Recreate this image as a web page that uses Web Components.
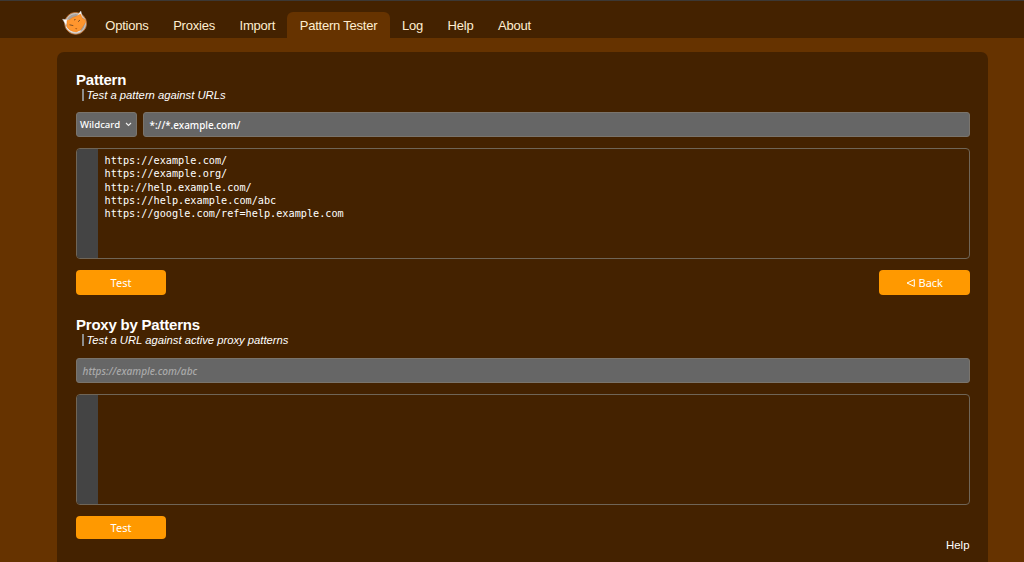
<!DOCTYPE html>
<html lang="en">
<head>
<meta charset="utf-8">
<title>Pattern Tester</title>
<style>
html,body{margin:0;height:100%;overflow:hidden;background:#663300}
body{font-family:"Liberation Sans",Arial,sans-serif;color:#fff}
</style>
</head>
<body>
<proxy-app></proxy-app>
<script>
const define = (name, html) => customElements.define(name, class extends HTMLElement {
  constructor() {
    super();
    this.attachShadow({mode: 'open'}).innerHTML = html;
  }
});

define('fox-logo', `<style>:host{display:block;width:26px;height:26px}svg{display:block}</style>
<svg width="26" height="26" viewBox="0 0 26 26">
<circle cx="13.6" cy="13.4" r="10.900" fill="#a6a29f" stroke="#c8742c" stroke-width=".9"/>
<circle cx="13.6" cy="13.4" r="9.900" fill="none" stroke="#d0c8c0" stroke-width="1"/>
<path d="M4.500 16.500c2.500 5 8 7 14 4" fill="none" stroke="#efefef" stroke-width="1.600"/>
<path d="M.6 9.300 4 15l3.500-5zM18.800 1l-4.300 6 6.200 1z" fill="#fff" stroke="#c8c8c8" stroke-width=".5"/>
<path d="M5 10.500c3-.4 4-2.600 7-3.500 2.500-.7 4-1.300 6.500-3l2 4.500c3.200 1 4 2.700 2.200 5.200l-4 6.200-4.500 2c-4 0-7.800-2.200-9.300-5.200z" fill="#ff962e" stroke="#e87818" stroke-width=".5"/>
<path d="m7.500 14.800 3.800.8M16 11.800l2-1.800M12 10l1.500-.5" fill="none" stroke="#815025" stroke-width="1"/>
<path d="m12.800 18.600 2.500-.5-.9 1.500z" fill="#a85a1c"/>
</svg>`);

define('nav-tab', `<style>
:host{display:block;box-sizing:border-box;height:26px;padding:0 12.300px;font-size:13px;letter-spacing:-.22px;line-height:27px;color:#ffeed0;border-radius:6px 6px 0 0;white-space:nowrap}
:host([active]){background:#663300}
</style><slot></slot>`);

define('nav-bar', `<style>
:host{display:flex;box-sizing:border-box;height:38px;padding-left:62px;align-items:flex-end;background:#442200;border-top:1px solid #3c3835}
fox-logo{margin:0 5px 2px 0}
</style><fox-logo></fox-logo>
<slot></slot>`);

define('section-head', `<style>
:host{display:block}
h2{margin:0;font-size:15px;letter-spacing:-.22px;line-height:19px;height:19px;font-weight:700}
p{margin:0 0 0 5.500px;height:12px;line-height:12px;border-left:2px solid #8d8d8d;padding-left:3px;font-size:11.250px;font-style:italic}
</style><h2><slot name="title"></slot></h2><p><slot></slot></p>`);

define('text-field', `<style>
:host{display:flex;align-items:center;box-sizing:border-box;height:25px;background:#666;border:1px solid #7a746c;border-radius:3px;padding:0 5.500px;font:500 9.900px "Noto Sans","Open Sans",sans-serif;color:#fff;white-space:nowrap}
:host([placeholder]){color:#aaa;font-size:10.100px;font-style:italic}
</style><slot></slot>`);

define('select-field', `<style>
:host{display:flex;align-items:center;justify-content:space-between;box-sizing:border-box;width:61px;height:25px;background:#666;border:1px solid #7a746c;border-radius:3px;padding:0 4px 0 3px;font:500 9.600px "Noto Sans","Open Sans",sans-serif;color:#fff}
</style><span><slot></slot></span><svg width="7" height="5" viewBox="0 0 7 5"><path d="m1 1 2.500 2.500L6 1" fill="none" stroke="#eee" stroke-width="1.100"/></svg>`);

define('result-box', `<style>
:host{display:flex;box-sizing:border-box;height:111px;border:1px solid #6f6557;border-radius:4px;overflow:hidden}
i{width:21px;background:#444}
pre{margin:0;padding:5px 6.500px;font:10.200px/13.300px "DejaVu Sans Mono",monospace}
</style><i></i><pre><slot></slot></pre>`);

define('action-button', `<style>
:host{display:flex;align-items:center;justify-content:center;gap:4px;box-sizing:border-box;width:90px;height:25px;background:#ff9900;border-radius:4px;font:11px "Noto Sans",sans-serif;color:#fff}
</style><slot name="icon"></slot><span><slot></slot></span>`);

define('proxy-app', `<style>
:host{display:block;height:562px;overflow:hidden}
main{box-sizing:border-box;width:931px;height:530px;margin:14px 0 0 57px;padding:18px 18.500px 0 19px;background:#442200;border-radius:7px;display:flex;flex-direction:column}
.row{display:flex;gap:6px;margin-top:11px}
.row text-field{flex:1}
.actions{display:flex;justify-content:space-between;margin-top:11px}
.back{width:90.500px}
result-box{margin-top:11px}
.second{margin-top:20px}
.second + text-field{margin-top:12px}
.actions.last action-button{height:23px}
.help{align-self:flex-end;font-size:11.400px;line-height:14px;margin-top:-1px}
</style>
<nav-bar><nav-tab>Options</nav-tab><nav-tab>Proxies</nav-tab><nav-tab>Import</nav-tab><nav-tab active>Pattern Tester</nav-tab><nav-tab>Log</nav-tab><nav-tab>Help</nav-tab><nav-tab>About</nav-tab></nav-bar>
<main>
<section-head><span slot="title">Pattern</span>Test a pattern against URLs</section-head>
<div class="row"><select-field>Wildcard</select-field><text-field>*://*.example.com/</text-field></div>
<result-box>https://example.com/
https://example.org/
http://help.example.com/
https://help.example.com/abc
https://google.com/ref=help.example.com</result-box>
<div class="actions"><action-button>Test</action-button><action-button class="back"><svg slot="icon" width="9" height="8" viewBox="0 0 9 8"><path d="M8.300.6v6.800L1 4z" fill="none" stroke="#fff"/></svg>Back</action-button></div>
<section-head class="second"><span slot="title">Proxy by Patterns</span>Test a URL against active proxy patterns</section-head>
<text-field placeholder>https://example.com/abc</text-field>
<result-box></result-box>
<div class="actions last"><action-button>Test</action-button></div>
<div class="help">Help</div>
</main>`);
</script>
</body>
</html>
